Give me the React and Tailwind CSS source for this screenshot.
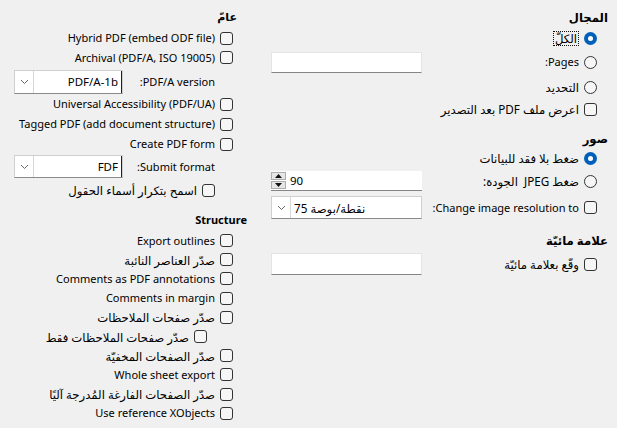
import React from 'react';

const Check = () => (
  <span className="w-[13px] h-[13px] border border-[#333] rounded-[3px] bg-[#f6f6f6] shrink-0" />
);

const Radio = ({ checked }) =>
  checked ? (
    <span className="w-[13px] h-[13px] rounded-full bg-[#005fb8] flex items-center justify-center shrink-0">
      <span className="w-[5px] h-[5px] rounded-full bg-white" />
    </span>
  ) : (
    <span className="w-[13px] h-[13px] rounded-full border border-[#333] bg-[#f6f6f6] shrink-0" />
  );

const Chevron = () => (
  <svg width="9" height="6" viewBox="0 0 9 6" fill="none">
    <path d="M1 1l3.5 3.5L8 1" stroke="#666" strokeWidth="1" />
  </svg>
);

// ar: arabic label, slightly bigger to match the Segoe UI Arabic widths
const CheckRow = ({ children, ar, h = 'h-[20px]', extra = '' }) => (
  <div className={`flex items-center gap-[5px] whitespace-nowrap ${h} ${extra}`}>
    <Check />
    {ar ? <span className="text-[11.7px]">{children}</span> : <span dir="ltr">{children}</span>}
  </div>
);

const Combo = ({ value, w = 'w-[109px]', h = 'h-[24px]', left }) => (
  <div dir="ltr" className={`${w} ${h} bg-white border border-[#cfcfcf] border-b-[#8a8a8a] flex shrink-0`}>
    <span className="w-[19px] border-r border-[#d6d6d6] flex items-center justify-center">
      <Chevron />
    </span>
    <span
      className={`flex-1 flex items-center whitespace-nowrap ${left ? 'justify-start pl-[3px] text-[11.7px]' : 'justify-end pr-[3px] border-r border-[#222] text-[11.5px]'}`}
    >
      {value}
    </span>
  </div>
);

const Field = ({ h = 'h-[21px]' }) => (
  <div className={`w-[151px] ${h} bg-white border border-[#e4e4e4] border-b-[#868686] shrink-0`} />
);

const Spin = () => (
  <div dir="ltr" className="w-[151px] h-[20px] bg-white border-b border-[#868686] flex items-center shrink-0">
    <span className="w-[15px] h-full flex flex-col gap-[1px] py-[1px]">
      <span className="flex-1 bg-[#e6e6e6] border border-[#adadad] flex items-center justify-center">
        <svg width="7" height="4" viewBox="0 0 7 4"><path d="M0 4L3.5 0L7 4z" fill="#111" /></svg>
      </span>
      <span className="flex-1 bg-[#e6e6e6] border border-[#adadad] flex items-center justify-center">
        <svg width="7" height="4" viewBox="0 0 7 4"><path d="M0 0L3.5 4L7 0z" fill="#111" /></svg>
      </span>
    </span>
    <span className="pl-[4px] text-[11.5px]">90</span>
  </div>
);

export default function App() {
  return (
    <div
      dir="rtl"
      className="w-[617px] h-[428px] bg-[#f0f0f0] text-black text-[11px] leading-[16px] flex gap-[24px] pr-[9px] pl-[14px] pt-[7px] overflow-hidden"
      style={{ fontFamily: '"Noto Sans", "DejaVu Sans", sans-serif' }}
    >
      {/* right column */}
      <div className="w-[337px] flex flex-col">
        <div className="h-[20px] font-bold flex items-center text-[11.7px]">المجال</div>
        <div className="pr-[11px] flex flex-col">
          <div className="h-[20px] mt-[1px] flex items-center gap-[5px]">
            <Radio checked />
            <span className="border border-dotted border-[#111] leading-[13px] px-[1px] text-[11.7px]">الكلّ</span>
          </div>
          <div className="h-[24px] mt-[2px] flex items-center justify-between">
            <div className="flex items-center gap-[5px]">
              <Radio />
              <span>Pages:</span>
            </div>
            <Field />
          </div>
          <div className="h-[20px] mt-[3px] flex items-center gap-[5px]">
            <Radio />
            <span className="text-[11.7px]">التحديد</span>
          </div>
          <CheckRow ar extra="mt-[2px]">اعرض ملف PDF بعد التصدير</CheckRow>
        </div>

        <div className="h-[20px] mt-[9px] font-bold flex items-center text-[11.7px]">صور</div>
        <div className="pr-[11px] flex flex-col">
          <div className="h-[20px] flex items-center gap-[5px]">
            <Radio checked />
            <span className="text-[11.7px]">ضغط بلا فقد للبيانات</span>
          </div>
          <div className="h-[20px] mt-[3px] flex items-center justify-between">
            <div className="flex items-center gap-[5px]">
              <Radio />
              <span className="text-[11.7px] whitespace-pre">ضغط JPEG  الجودة:</span>
            </div>
            <Spin />
          </div>
          <div className="h-[23px] mt-[5px] flex items-center justify-between">
            <div className="flex items-center gap-[5px] whitespace-nowrap">
              <Check />
              <span>Change image resolution to:</span>
            </div>
            <Combo value="75 نقطة/بوصة" w="w-[151px]" h="h-[23px]" left />
          </div>
        </div>

        <div className="h-[20px] mt-[11px] font-bold flex items-center text-[11.7px]">علامة مائيّة</div>
        <div className="pr-[11px] flex flex-col">
          <div className="h-[22px] mt-[3px] flex items-center justify-between">
            <div className="flex items-center gap-[5px]">
              <Check />
              <span className="text-[11.7px]">وقّع بعلامة مائيّة</span>
            </div>
            <Field h="h-[22px]" />
          </div>
        </div>
      </div>

      {/* left column */}
      <div className="w-[233px] flex flex-col">
        <div className="h-[20px] font-bold flex items-center pr-[10px] text-[11px]">عامّ</div>
        <div className="pr-[14px] flex flex-col">
          <CheckRow extra="mt-[1px]">Hybrid PDF (embed ODF file)</CheckRow>
          <CheckRow h="h-[19px]">Archival (PDF/A, ISO 19005)</CheckRow>
          <div className="h-[24px] mt-[3px] flex items-center justify-between whitespace-nowrap">
            <span className="pr-[18px]">PDF/A version:</span>
            <Combo value="PDF/A-1b" />
          </div>
          <CheckRow>Universal Accessibility (PDF/UA)</CheckRow>
          <CheckRow>Tagged PDF (add document structure)</CheckRow>
          <CheckRow>Create PDF form</CheckRow>
          <div className="h-[23px] mt-[1px] flex items-center justify-between whitespace-nowrap">
            <span className="pr-[18px]">Submit format:</span>
            <Combo value="FDF" h="h-[23px]" />
          </div>
          <CheckRow ar h="h-[24px]" extra="pr-[18px]">اسمح بتكرار أسماء الحقول</CheckRow>
        </div>

        <div className="h-[20px] mt-[8px] font-bold flex items-center">Structure</div>
        <div className="pr-[14px] flex flex-col">
          <CheckRow h="h-[19.2px]" extra="mt-[1px]">Export outlines</CheckRow>
          <CheckRow ar h="h-[19.2px]">صدّر العناصر النائبة</CheckRow>
          <CheckRow h="h-[19.2px]">Comments as PDF annotations</CheckRow>
          <CheckRow h="h-[19.2px]">Comments in margin</CheckRow>
          <CheckRow ar h="h-[19.2px]">صدّر صفحات الملاحظات</CheckRow>
          <CheckRow ar h="h-[19.2px]" extra="pr-[26px]">صدّر صفحات الملاحظات فقط</CheckRow>
          <CheckRow ar h="h-[19.2px]">صدّر الصفحات المخفيّة</CheckRow>
          <CheckRow h="h-[19.2px]">Whole sheet export</CheckRow>
          <CheckRow ar h="h-[19.2px]">صدّر الصفحات الفارغة المُدرجة آليًا</CheckRow>
          <CheckRow h="h-[19.2px]">Use reference XObjects</CheckRow>
        </div>
      </div>
    </div>
  );
}
